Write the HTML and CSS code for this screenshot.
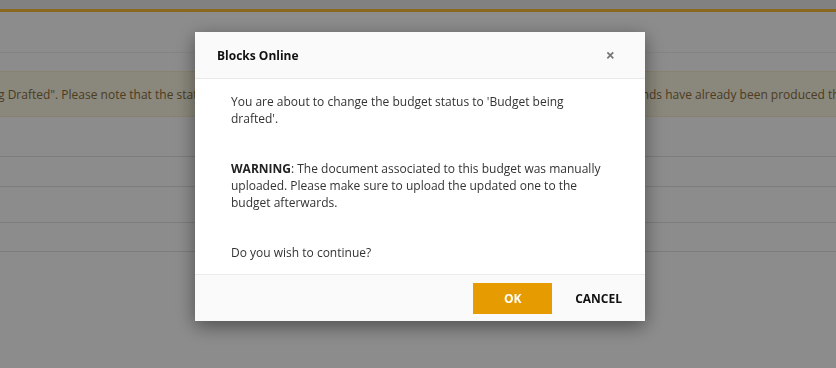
FILE: index.html
```html
<!DOCTYPE html>
<html lang="en">
<head>
    <meta charset="UTF-8">
    <meta name="viewport" content="width=device-width, initial-scale=1.0">
    <title>Blocks Online</title>
    <link rel="stylesheet" href="styles.css">
</head>
<body>

<div class="page">
  <div class="topbar"></div>
  <div class="subheader"></div>

  <div class="alert-band">
    <p class="alert-band__text">g Drafted". Please note that the status can only be changed back to previous status if no budget commitments or funds have already been produced this year.</p>
  </div>

  <div class="rows">
    <div class="row row--first"></div>
    <div class="row row--mid"></div>
    <div class="row row--tall"></div>
    <div class="row row--last"></div>
  </div>
</div>

<div class="overlay">
  <div class="modal">
    <div class="modal__header">
      <h4 class="modal__title">Blocks Online</h4>
      <span class="modal__close">&times;</span>
    </div>
    <div class="modal__body">
      <p>You are about to change the budget status to 'Budget being drafted'.</p>
      <p><b>WARNING</b>: The document associated to this budget was manually uploaded. Please make sure to upload the updated one to the budget afterwards.</p>
      <p>Do you wish to continue?</p>
    </div>
    <div class="modal__footer">
      <button class="btn btn--ok">OK</button>
      <button class="btn btn--cancel">CANCEL</button>
    </div>
  </div>
</div>

</body>
</html>
```

FILE: styles.css
```css
* {
    box-sizing: border-box;
}

body {
    margin: 0;
    font-family: "Open Sans", "Liberation Sans", sans-serif;
    font-size: 12px;
    color: #333;
    background: #fff;
    overflow: hidden;
}

/* page behind the dialog */

.topbar {
    height: 12px;
    background: #ebebeb;
    border-bottom: 3px solid #fbbf37;
}

.subheader {
    height: 41px;
    border-bottom: 1px solid #f1f1f1;
}

.alert-band {
    margin-top: 18px;
    height: 46px;
    background: #fcf8e3;
    border-top: 1px solid #faebcc;
    border-bottom: 1px solid #faebcc;
    overflow: hidden;
    display: flex;
    align-items: center;
}

.alert-band__text {
    margin: 0;
    white-space: nowrap;
    text-indent: -2px;
    font-size: 12px;
    color: #8a6d3b;
}

.row {
    border-bottom: 1px solid #dfe3ea;
}

.row--first { height: 40px; }
.row--mid { height: 30px; }
.row--tall { height: 36px; }
.row--last { height: 29px; }

/* dialog */

.overlay {
    position: fixed;
    inset: 0;
    background: rgba(0, 0, 0, 0.45);
    padding-top: 32px;
}

.modal {
    width: 450px;
    margin-left: 195px;
    background: #fff;
    box-shadow: 0 5px 18px rgba(0, 0, 0, 0.45);
}

.modal__header {
    height: 47px;
    padding: 0 30px 0 22px;
    display: flex;
    align-items: center;
    justify-content: space-between;
    background: #fafafa;
    border-bottom: 1px solid #e9e9e9;
}

.modal__title {
    margin: 0;
    font-size: 12px;
    font-weight: 700;
    color: #111;
}

.modal__close {
    font-size: 16px;
    font-weight: 700;
    line-height: 1;
    color: #777;
}

.modal__body {
    padding: 14px 36px 13px;
    line-height: 17px;
    color: #333;
}

.modal__body p {
    margin: 0 0 33px;
}

.modal__body p:last-child {
    margin-bottom: 0;
}

.modal__body b {
    color: #222;
}

.modal__footer {
    height: 47px;
    padding: 0 23px 0 0;
    display: flex;
    align-items: center;
    justify-content: flex-end;
    gap: 23px;
    background: #fafafa;
    border-top: 1px solid #ececec;
}

.btn {
    font-family: inherit;
    font-size: 12px;
    font-weight: 700;
    border: 0;
    padding: 0;
    cursor: pointer;
}

.btn--ok {
    width: 79px;
    height: 31px;
    background: #e69b00;
    color: #fff;
}

.btn--cancel {
    background: none;
    color: #111;
}
```
